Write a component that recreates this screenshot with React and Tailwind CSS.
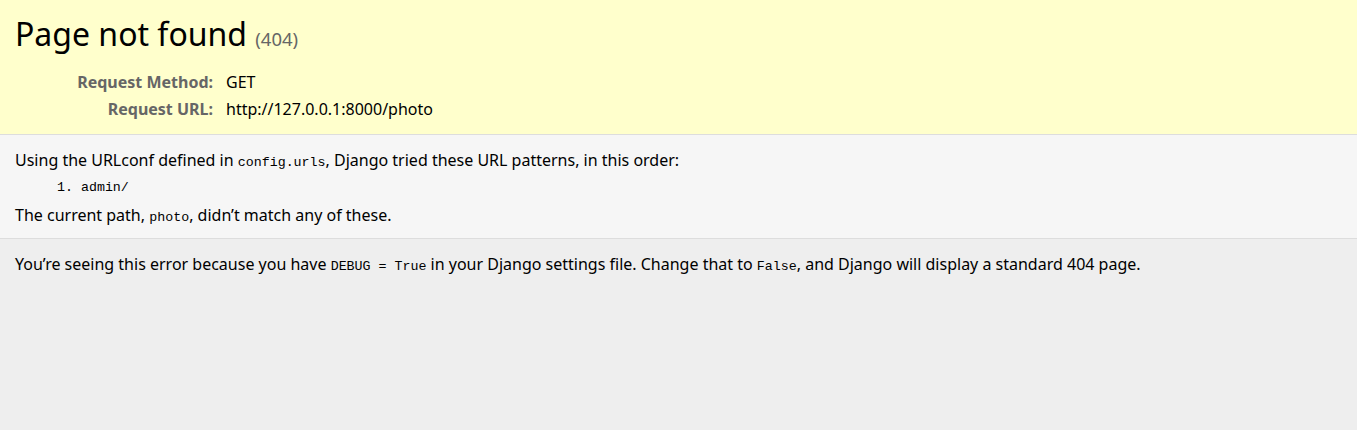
export default function App() {
  const mono = "font-['Liberation_Mono',monospace] text-[13.3px]";
  return (
    <div className="min-h-[430px] bg-[#eeeeee] text-black font-['Noto_Sans',sans-serif] text-[16px]">
      <div className="bg-[#ffffcc] border-b border-[#dddddd] px-[15px] pt-[14px] pb-[11px]">
        <h1 className="text-[32px] leading-[40px] font-normal mb-[15px]">
          Page not found <span className="text-[18.5px] leading-none text-[#666666]">(404)</span>
        </h1>
        <div className="grid grid-cols-[198px_1fr] gap-x-[13px] leading-[27px]">
          <div className="text-right font-bold text-[#666666]">Request Method:</div>
          <div>GET</div>
          <div className="text-right font-bold text-[#666666]">Request URL:</div>
          <div>http://127.0.0.1:8000/photo</div>
        </div>
      </div>

      <div className="bg-[#f6f6f6] border-b border-[#dddddd] px-[15px] pt-[12px] pb-[7px] leading-[27px]">
        <p>
          Using the URLconf defined in <code className={mono}>config.urls</code>, Django tried these URL
          patterns, in this order:
        </p>
        <ol className="list-decimal list-inside mt-0 mb-[2px] ml-[42px]">
          <li className={`${mono} leading-[24px]`}>admin/</li>
        </ol>
        <p>
          The current path, <code className={mono}>photo</code>, didn’t match any of these.
        </p>
      </div>

      <div className="px-[15px] pt-[12px] pb-[10px] leading-[27px]">
        <p>
          You’re seeing this error because you have <code className={mono}>DEBUG = True</code> in your
          Django settings file. Change that to <code className={mono}>False</code>, and Django will
          display a standard 404 page.
        </p>
      </div>
    </div>
  );
}
